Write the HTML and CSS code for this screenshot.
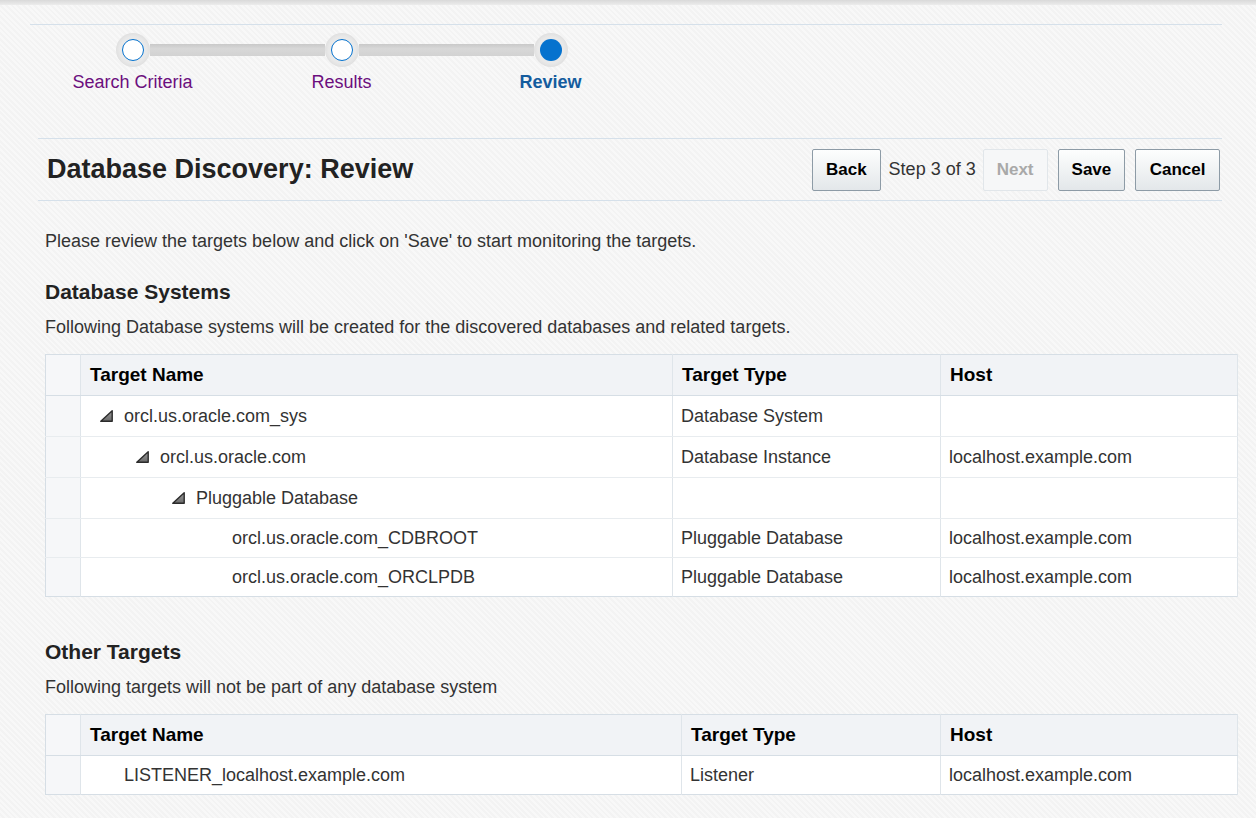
FILE: index.html
```html
<!DOCTYPE html>
<html lang="en">
<head>
<meta charset="utf-8">
<title>Database Discovery: Review</title>
<link rel="stylesheet" href="styles.css">
</head>
<body>
<div class="topband"></div>
<div class="page">
  <div class="train">
    <div class="step">
      <div class="track"><span class="half hidden"></span><span class="stop"><span class="dot visited"></span></span><span class="half"></span></div>
      <a class="label visited-link">Search Criteria</a>
    </div>
    <div class="step">
      <div class="track"><span class="half"></span><span class="stop"><span class="dot visited"></span></span><span class="half"></span></div>
      <a class="label visited-link">Results</a>
    </div>
    <div class="step">
      <div class="track"><span class="half"></span><span class="stop"><span class="dot current"></span></span><span class="half hidden"></span></div>
      <span class="label current-label">Review</span>
    </div>
  </div>

  <div class="titlebar">
    <h1 class="title">Database Discovery: Review</h1>
    <div class="actions">
      <button class="btn">Back</button>
      <span class="stepinfo">Step 3 of 3</span>
      <button class="btn disabled">Next</button>
      <button class="btn save">Save</button>
      <button class="btn wide">Cancel</button>
    </div>
  </div>

  <div class="content">
    <p class="intro">Please review the targets below and click on 'Save' to start monitoring the targets.</p>

    <h2 class="section-title">Database Systems</h2>
    <p class="section-desc">Following Database systems will be created for the discovered databases and related targets.</p>

    <table class="grid grid-a">
      <thead>
        <tr><th class="sel"></th><th class="c-name">Target Name</th><th class="c-type">Target Type</th><th class="c-host">Host</th></tr>
      </thead>
      <tbody>
        <tr class="tall"><td class="sel"></td><td><div class="node lvl0"><span class="tog"><svg width="13" height="12" viewBox="0 0 13 12"><defs><linearGradient id="tg" x1="0" y1="0" x2="0" y2="1"><stop offset="0" stop-color="#9a9a9a"/><stop offset="1" stop-color="#6a6a6a"/></linearGradient></defs><polygon points="0.8,11.2 12.2,11.2 12.2,0.8" fill="url(#tg)" stroke="#2b2b2b" stroke-width="1.4" stroke-linejoin="round"/></svg></span>orcl.us.oracle.com_sys</div></td><td>Database System</td><td></td></tr>
        <tr class="tall"><td class="sel"></td><td><div class="node lvl1"><span class="tog"><svg width="13" height="12" viewBox="0 0 13 12"><polygon points="0.8,11.2 12.2,11.2 12.2,0.8" fill="url(#tg)" stroke="#2b2b2b" stroke-width="1.4" stroke-linejoin="round"/></svg></span>orcl.us.oracle.com</div></td><td>Database Instance</td><td>localhost.example.com</td></tr>
        <tr class="tall"><td class="sel"></td><td><div class="node lvl2"><span class="tog"><svg width="13" height="12" viewBox="0 0 13 12"><polygon points="0.8,11.2 12.2,11.2 12.2,0.8" fill="url(#tg)" stroke="#2b2b2b" stroke-width="1.4" stroke-linejoin="round"/></svg></span>Pluggable Database</div></td><td></td><td></td></tr>
        <tr class="short"><td class="sel"></td><td><div class="node lvl3"><span class="tog"></span>orcl.us.oracle.com_CDBROOT</div></td><td>Pluggable Database</td><td>localhost.example.com</td></tr>
        <tr class="short last"><td class="sel"></td><td><div class="node lvl3"><span class="tog"></span>orcl.us.oracle.com_ORCLPDB</div></td><td>Pluggable Database</td><td>localhost.example.com</td></tr>
      </tbody>
    </table>

    <h2 class="section-title other">Other Targets</h2>
    <p class="section-desc">Following targets will not be part of any database system</p>

    <table class="grid grid-b">
      <thead>
        <tr><th class="sel"></th><th class="c-name">Target Name</th><th class="c-type">Target Type</th><th class="c-host">Host</th></tr>
      </thead>
      <tbody>
        <tr class="short last"><td class="sel"></td><td><div class="node lvl0"><span class="tog"></span>LISTENER_localhost.example.com</div></td><td>Listener</td><td>localhost.example.com</td></tr>
      </tbody>
    </table>
  </div>
</div>
</body>
</html>
```

FILE: styles.css
```css
* { box-sizing: border-box; }

html, body {
  margin: 0;
  padding: 0;
}

body {
  font-family: "Liberation Sans", Arial, sans-serif;
  color: #333;
  background-color: #f6f6f6;
  background-image: repeating-linear-gradient(45deg, #f8f8f8 0 2px, #f3f3f3 2px 4px);
  min-height: 818px;
}

.topband {
  height: 5px;
  background: linear-gradient(#d9d9d9, #ececec);
}

.page {
  padding-top: 19px;
}

/* ---------- train ---------- */
.train {
  display: flex;
  margin-left: 30px;
  margin-right: 34px;
  border-top: 1px solid #d5e0ea;
  padding-top: 8px;
  height: 114px;
}

.step {
  width: 209px;
  display: flex;
  flex-direction: column;
  align-items: center;
}

.step:first-child { margin-left: -2px; }

.track {
  display: flex;
  align-items: center;
  width: 100%;
}

.half {
  flex: 1;
  height: 12px;
  background: linear-gradient(#c9c9c9, #d8d8d8 40%, #d2d2d2);
}

.half.hidden { visibility: hidden; }

.stop {
  width: 34px;
  height: 34px;
  border-radius: 50%;
  background: radial-gradient(circle, #e9e9e9 55%, #d0d0d0 100%);
  display: flex;
  align-items: center;
  justify-content: center;
  flex: none;
}

.dot {
  width: 22px;
  height: 22px;
  border-radius: 50%;
}

.dot.visited {
  background: #fff;
  border: 1.5px solid #0572ce;
}

.dot.current {
  background: #0572ce;
}

.label {
  margin-top: 5px;
  font-size: 18px;
  line-height: 20px;
  white-space: nowrap;
}

.visited-link { color: #6c0f7e; }

.current-label {
  color: #145c9e;
  font-weight: bold;
}

/* ---------- title bar ---------- */
.titlebar {
  display: flex;
  align-items: center;
  justify-content: space-between;
  margin-left: 38px;
  margin-right: 34px;
  border-top: 1px solid #d5e0ea;
  border-bottom: 1px solid #d5e0ea;
  padding: 9px 2px 9px 9px;
  height: 63px;
}

.title {
  margin: 0;
  font-size: 27px;
  line-height: 30px;
  font-weight: bold;
  color: #222;
  position: relative;
  top: -1px;
}

.actions {
  display: flex;
  align-items: center;
}

.btn {
  font-family: "Liberation Sans", Arial, sans-serif;
  font-size: 17px;
  font-weight: bold;
  color: #000;
  height: 42px;
  padding: 0 13px;
  border: 1px solid #8d9ba6;
  border-radius: 2px;
  background: linear-gradient(#fdfefe, #e3e7ea);
  margin-left: 10px;
}

.btn:first-child { margin-left: 0; }

.btn.wide { padding: 0 13.5px; }

.btn.disabled {
  color: #a9a9a9;
  border-color: #e1e6ea;
  background: #f6f7f8;
  margin-left: 7px;
  padding: 0 13px;
}

.stepinfo {
  font-size: 18px;
  color: #333;
  margin-left: 8px;
}

/* ---------- content ---------- */
.content {
  margin-left: 45px;
  margin-right: 18px;
}

.intro {
  margin: 30px 0 0;
  font-size: 18px;
  line-height: 20px;
}

.section-title {
  margin: 30px 0 0;
  font-size: 21px;
  line-height: 22px;
  font-weight: bold;
  color: #222;
}

.section-title.other { margin-top: 44px; }

.section-desc {
  margin: 14px 0 0;
  font-size: 18px;
  line-height: 20px;
}

.grid {
  margin-top: 17px;
  width: 100%;
  border-collapse: collapse;
  table-layout: fixed;
  background: #fff;
  border: 1px solid #d6dee5;
  font-size: 18px;
}

.grid th, .grid td {
  border-right: 1px solid #dfe5ea;
  padding: 0 8px;
  text-align: left;
  white-space: nowrap;
}

.grid th {
  background: #f1f3f6;
  height: 41px;
  font-size: 19px;
  font-weight: bold;
  color: #000;
  padding-left: 9px;
  border-bottom: 1px solid #d6dee5;
}

.grid td {
  color: #333;
  border-bottom: 1px solid #e8ecef;
}

.grid tr.last td { border-bottom: none; }

.grid .sel {
  width: 35px;
  background: #f6f7f9;
}

.grid-a .c-name { width: 592px; }
.grid-a .c-type { width: 268px; }
.grid-b .c-name { width: 601px; }
.grid-b .c-type { width: 259px; }

tr.tall td { height: 41px; }
tr.short td { height: 39px; }

.grid td:nth-child(2) { padding-left: 19px; }

.node {
  display: flex;
  align-items: center;
}

.tog {
  width: 13px;
  height: 12px;
  margin-right: 11px;
  display: inline-flex;
  flex: none;
}

.tog svg { display: block; }

.lvl1 { margin-left: 36px; }
.lvl2 { margin-left: 72px; }
.lvl3 { margin-left: 108px; }
```
